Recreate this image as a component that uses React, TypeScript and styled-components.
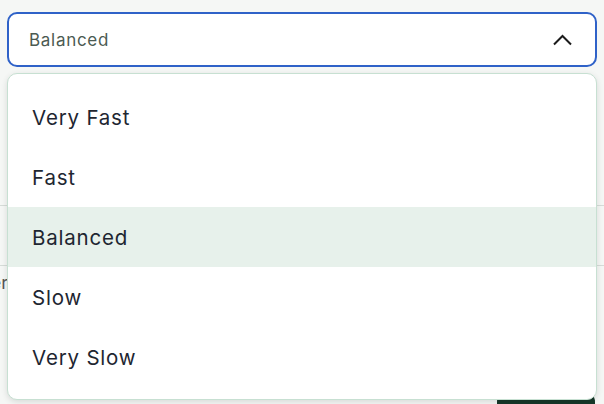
import styled, { createGlobalStyle } from 'styled-components'

const GlobalStyle = createGlobalStyle`
  html, body {
    margin: 0;
    padding: 0;
    background: #f5f7f5;
    font-family: Inter, 'Noto Sans', sans-serif;
  }
`

const Page = styled.div`
  position: relative;
  width: 604px;
  height: 404px;
  overflow: hidden;
  background: #f5f7f5;
`

const SelectWrap = styled.div`
  position: relative;
  z-index: 2;
  padding: 12px 7px 0 7px;
`

const Trigger = styled.button`
  display: flex;
  align-items: center;
  justify-content: space-between;
  box-sizing: border-box;
  width: 100%;
  height: 55px;
  padding: 0 23px 0 20px;
  border: 2px solid #2f62c8;
  border-radius: 10px;
  background: #fff;
  font-family: Inter, sans-serif;
  font-size: 17px;
  letter-spacing: 0.7px;
  color: #4b5a52;
  cursor: pointer;
`

const Menu = styled.ul`
  position: absolute;
  top: calc(100% + 6px);
  left: 7px;
  right: 7px;
  margin: 0;
  padding: 13px 0 12px 0;
  list-style: none;
  background: #fff;
  border: 1px solid #c7e0d2;
  border-radius: 10px;
  box-shadow: 0 2px 6px rgba(0, 0, 0, 0.12);
`

const Option = styled.li<{ $active?: boolean }>`
  display: flex;
  align-items: center;
  height: 60px;
  padding-left: 24px;
  font-size: 20.5px;
  letter-spacing: 0.8px;
  color: #1e2631;
  background: ${(p) => (p.$active ? '#e7f1eb' : 'transparent')};
`

const Behind = styled.div`
  padding-top: 79px;
`

const Row = styled.div`
  height: 59px;
  border-bottom: 1px solid #d6dcd8;
`

const Label = styled.div`
  width: 8px;
  margin-top: 6px;
  display: flex;
  justify-content: flex-end;
  overflow: hidden;
  font-size: 18px;
  color: #555;
  white-space: nowrap;
`

const Footer = styled.div`
  display: flex;
  justify-content: flex-end;
  padding: 97px 9px 0 0;
`

const PrimaryButton = styled.button`
  width: 98px;
  height: 44px;
  border: none;
  border-radius: 12px;
  background: #16382a;
`

const Chevron = () => (
  <svg width="19" height="12" viewBox="0 0 19 12" fill="none">
    <path d="M1 10.5L9.5 2L18 10.5" stroke="#1b1b1b" strokeWidth="2" />
  </svg>
)

const options = ['Very Fast', 'Fast', 'Balanced', 'Slow', 'Very Slow']

export default function App() {
  const value = 'Balanced'
  return (
    <>
      <GlobalStyle />
      <Page>
        <SelectWrap>
          <Trigger>
            <span>{value}</span>
            <Chevron />
          </Trigger>
          <Menu>
            {options.map((o) => (
              <Option key={o} $active={o === value}>
                {o}
              </Option>
            ))}
          </Menu>
        </SelectWrap>
        <Behind>
          <Row />
          <Row />
          <Label>Transcriber</Label>
        </Behind>
        <Footer>
          <PrimaryButton />
        </Footer>
      </Page>
    </>
  )
}
